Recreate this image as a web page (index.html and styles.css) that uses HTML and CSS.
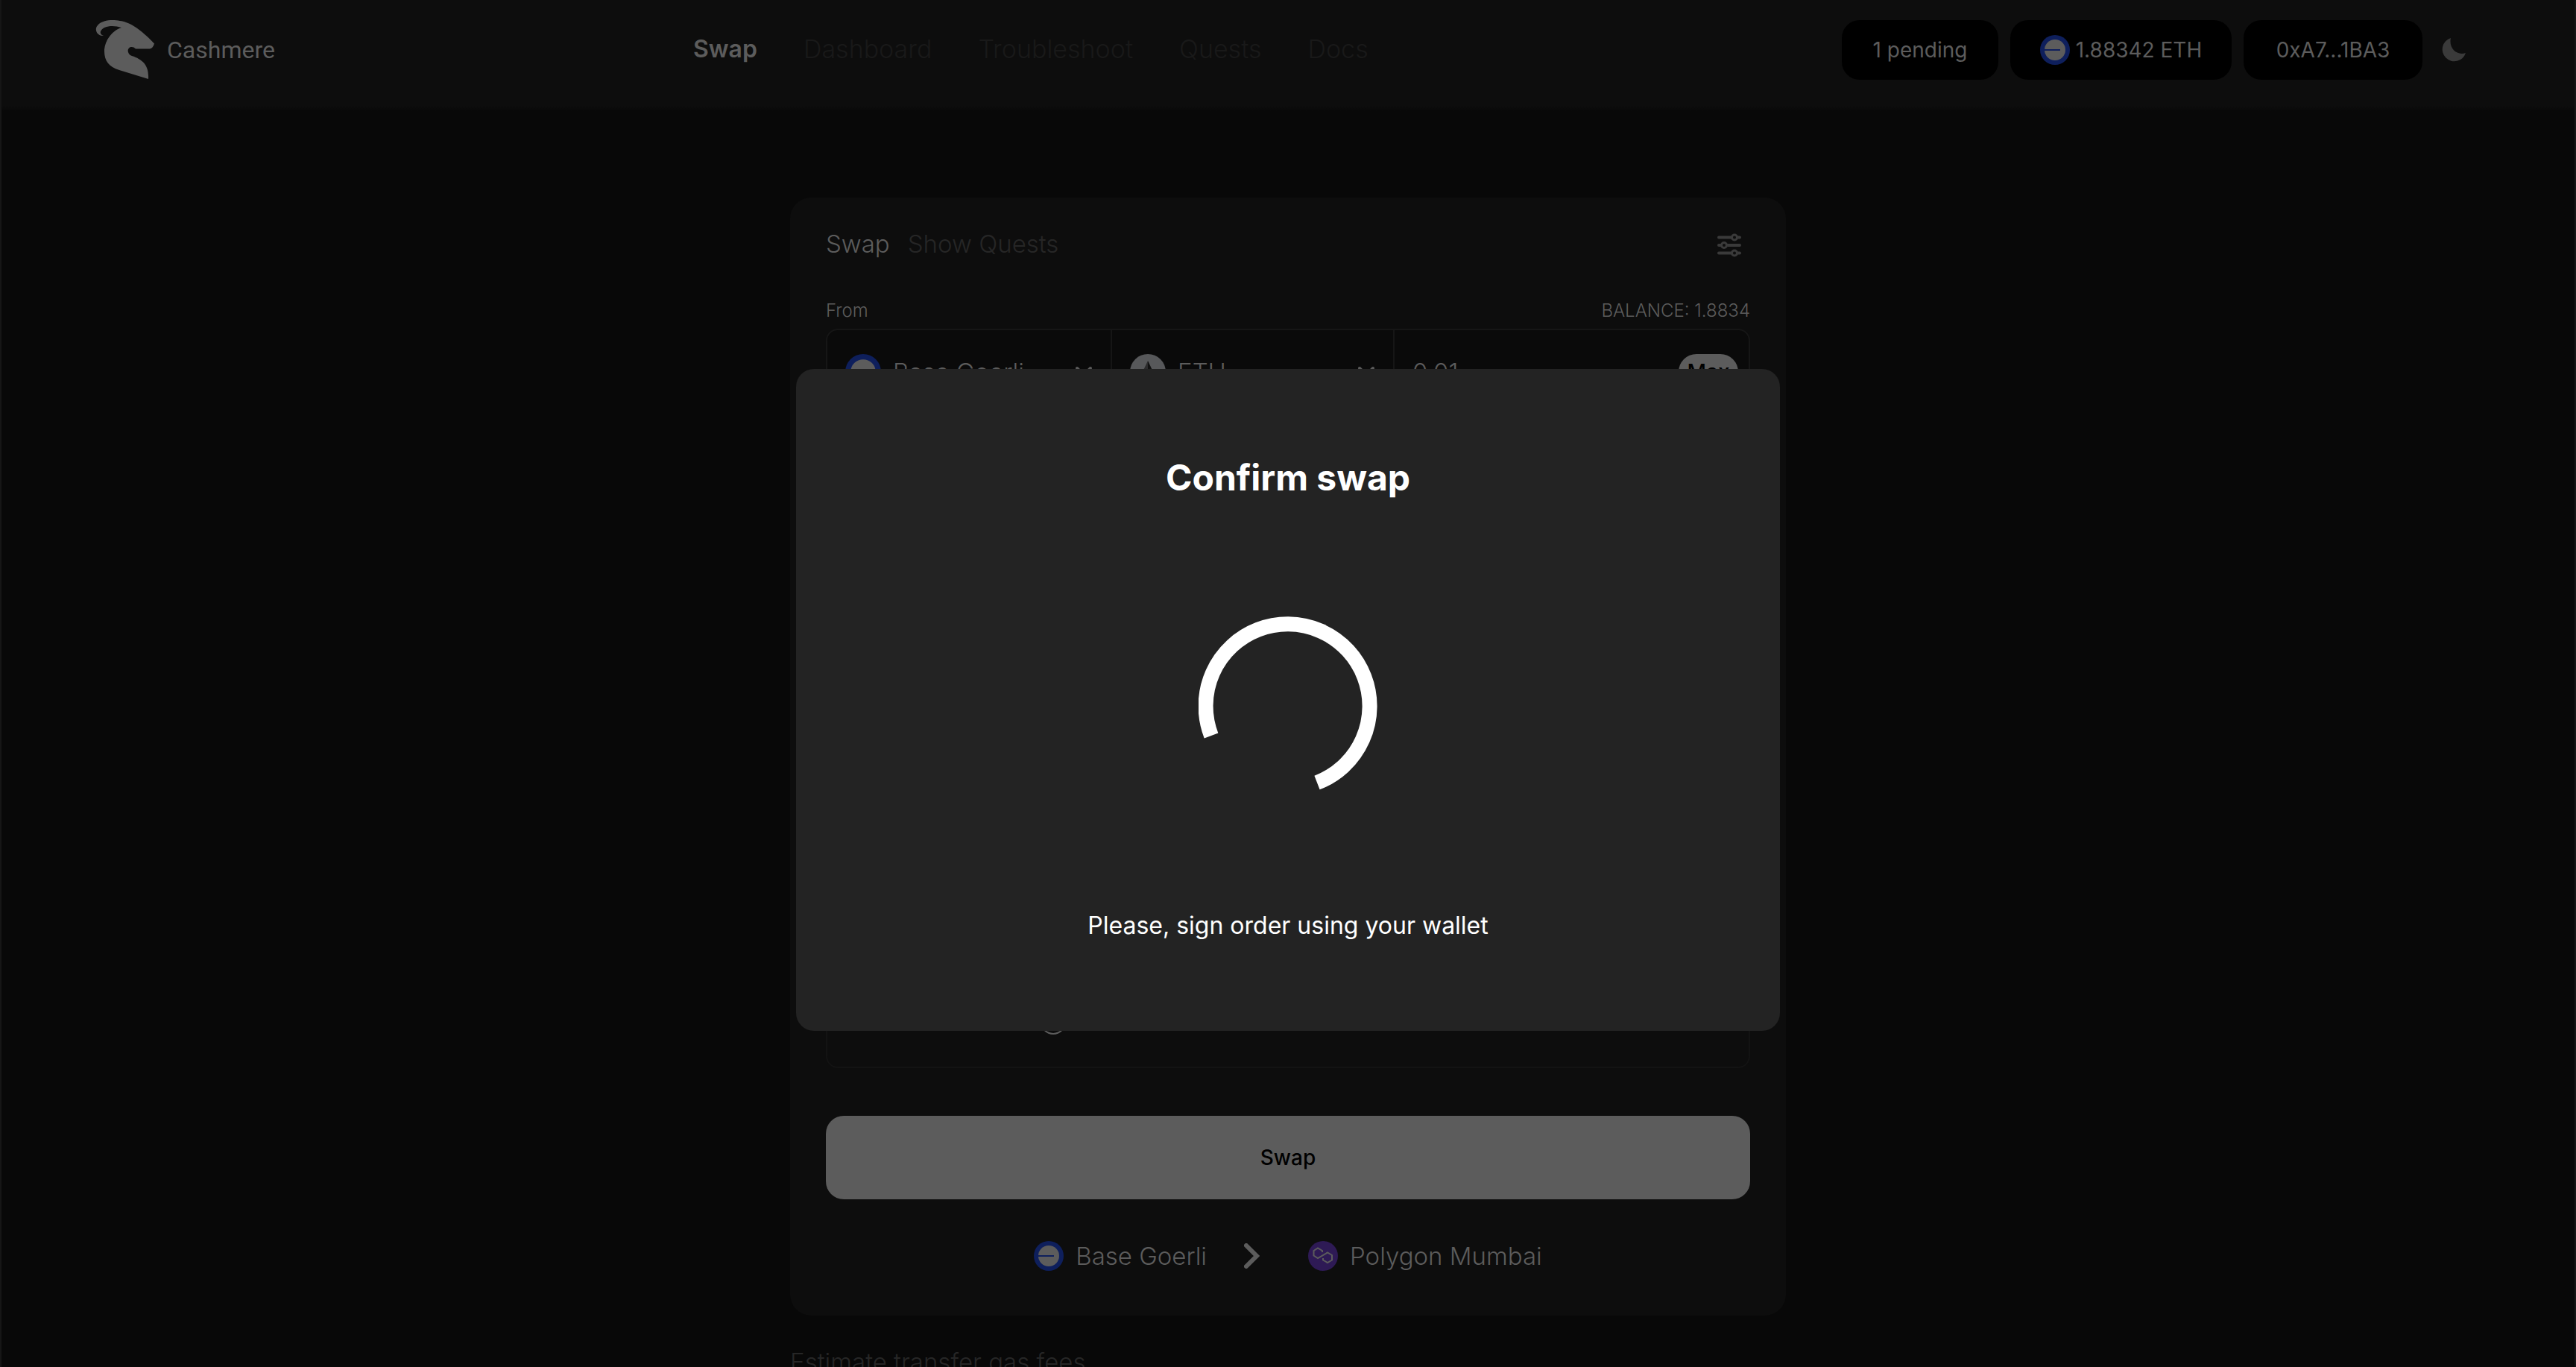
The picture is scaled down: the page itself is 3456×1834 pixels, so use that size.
FILE: index.html
```html
<!DOCTYPE html>
<html lang="en">
<head>
<meta charset="utf-8">
<title>Cashmere – Swap</title>
<link rel="stylesheet" href="styles.css">
</head>
<body>
<svg class="defs" width="0" height="0" aria-hidden="true">
  <symbol id="base" viewBox="0 0 40 40">
    <circle cx="20" cy="20" r="20" fill="#0e1f5c"/>
    <circle cx="20" cy="20" r="14" fill="#5c5c5c"/>
    <path d="M6 19h21v2H6z" fill="#0e1f5c"/>
  </symbol>
  <symbol id="eth" viewBox="0 0 48 48">
    <circle cx="24" cy="24" r="24" fill="#57585a"/>
    <path d="M24 9v15.500l-9 3.500z" fill="#2c2c2d"/>
    <path d="M24 9v15.500l9 3.500z" fill="#121212"/>
    <path d="M15 30l9 9 9-9-9 5z" fill="#222"/>
  </symbol>
  <symbol id="polygon" viewBox="0 0 40 40">
    <circle cx="20" cy="20" r="20" fill="#2e1a55"/>
    <path d="M19 15v-2l-6-3.500-5.500 3.500v6.500l5.500 3.500 13-7.500 6 3.500v6.500l-6 3.500-6-3.500v-2.500" fill="none" stroke="#5c5c5c" stroke-width="2"/>
  </symbol>
  <symbol id="down" viewBox="0 0 24 16">
    <path d="M3 3l9 9 9-9" fill="none" stroke="#5c5c5c" stroke-width="4" stroke-linecap="round" stroke-linejoin="round"/>
  </symbol>
</svg>

<header class="header">
  <a class="brand" href="#">
    <svg class="brand-mark" viewBox="0 0 80 80" aria-hidden="true">
      <path d="M11 21C2 22-2 12 3 7C12-3 32 0 41 3C56 8 72 24 79 31.500C78 35 76 38 73 38.500H54C49 33 42 37 44 43C45 47 49 48 52 49C64 54 72 61 71 79L32 67C18 63 12 54 12 42C12 30 20 15 35 10C23 6 10 8 7 15C6 18 8 20 11 21Z" fill="#5c5c5c"/>
    </svg>
    <span>Cashmere</span>
  </a>
  <nav class="nav">
    <a class="active" href="#">Swap</a>
    <a href="#">Dashboard</a>
    <a href="#">Troubleshoot</a>
    <a href="#">Quests</a>
    <a href="#">Docs</a>
  </nav>
  <div class="account">
    <button class="pill" type="button">1 pending</button>
    <button class="pill balance" type="button"><svg class="icon-40" aria-hidden="true"><use href="#base"/></svg>1.88342 ETH</button>
    <button class="pill address" type="button">0xA7...1BA3</button>
    <button class="theme" type="button" aria-label="Toggle theme">
      <svg viewBox="0 0 32 32" aria-hidden="true"><path d="M12 0A16 16 0 1 0 32 20C20 24 9 14 12 0Z" fill="#3a3a3a"/></svg>
    </button>
  </div>
</header>

<main class="main">
  <section class="card">
    <div class="card-head">
      <div class="tabs">
        <button class="tab selected" type="button">Swap</button>
        <button class="tab" type="button">Show Quests</button>
      </div>
      <button class="settings" type="button" aria-label="Settings">
        <svg viewBox="0 0 32 32" fill="none" stroke="#3a3a3a" stroke-width="4" stroke-linecap="round" aria-hidden="true">
          <path d="M2 5.500h16M28 5.500h2M2 16h3M14 16h16M2 26.500h16M28 26.500h2"/>
          <circle cx="23" cy="5.500" r="3.500" stroke-width="3"/><circle cx="9" cy="16" r="3.500" stroke-width="3"/><circle cx="23" cy="26.500" r="3.500" stroke-width="3"/>
        </svg>
      </button>
    </div>
    <div class="labels"><label for="amount">From</label><span>BALANCE: 1.8834</span></div>
    <div class="fields">
      <button class="field" type="button"><svg class="icon-48" aria-hidden="true"><use href="#base"/></svg><span>Base Goerli</span><svg class="down" aria-hidden="true"><use href="#down"/></svg></button>
      <button class="field" type="button"><svg class="icon-48" aria-hidden="true"><use href="#eth"/></svg><span>ETH</span><svg class="down" aria-hidden="true"><use href="#down"/></svg></button>
      <div class="field amount"><input id="amount" type="text" value="0.01"><button class="max" type="button">Max</button></div>
    </div>
    <div class="details"><svg class="ring" viewBox="0 0 34 34" aria-hidden="true"><circle cx="17" cy="17" r="16" fill="none" stroke="#5c5c5c" stroke-width="2"/></svg></div>
    <button class="submit" type="button">Swap</button>
    <div class="route">
      <span class="chain"><svg class="icon-40" aria-hidden="true"><use href="#base"/></svg>Base Goerli</span>
      <svg class="next" viewBox="0 0 22 34" aria-hidden="true"><path d="M3 3l14 14L3 31" fill="none" stroke="#5c5c5c" stroke-width="6" stroke-linecap="round" stroke-linejoin="miter"/></svg>
      <span class="chain"><svg class="icon-40" aria-hidden="true"><use href="#polygon"/></svg>Polygon Mumbai</span>
    </div>
  </section>
  <p class="estimate">Estimate transfer gas fees</p>
</main>

<div class="overlay">
  <div class="modal" role="dialog" aria-modal="true" aria-labelledby="modal-title">
    <h2 id="modal-title">Confirm swap</h2>
    <svg class="spinner" viewBox="0 0 240 240" aria-hidden="true"><path d="M17 160A110 110 0 1 1 159 223" fill="none" stroke="#fff" stroke-width="20"/></svg>
    <p>Please, sign order using your wallet</p>
  </div>
</div>
</body>
</html>
```
FILE: styles.css
```css
* { box-sizing: border-box; }

body {
  margin: 0;
  height: 100vh;
  overflow: hidden;
  background: #080808;
  color: #5c5c5c;
  font: 300 33px/40px Inter, "Open Sans", sans-serif;
}

button, input {
  margin: 0;
  padding: 0;
  border: 0;
  background: none;
  color: inherit;
  font: inherit;
}

a { color: inherit; text-decoration: none; }
svg { display: block; flex: none; }
.defs { position: absolute; }

.header {
  display: grid;
  grid-template-columns: minmax(0, 802px) auto 1fr;
  align-items: start;
  height: 148px;
  padding: 27px 148px 0 128px;
  background: linear-gradient(#0d0d0d 142px, #090909 148px);
}

.brand {
  display: flex;
  align-items: center;
  gap: 16px;
  height: 80px;
  font: 400 32px/40px Roboto, sans-serif;
}
.brand-mark { width: 80px; height: 80px; }

.nav {
  display: flex;
  align-items: center;
  gap: 62px;
  height: 78px;
  color: #191919;
  font-size: 34px;
}
.nav .active { color: #5c5c5c; font-size: 32px; font-weight: 600; }

.account { display: flex; justify-content: flex-end; gap: 16px; }
.pill {
  display: flex;
  align-items: center;
  justify-content: center;
  gap: 8px;
  height: 80px;
  min-width: 210px;
  border-radius: 24px;
  background: #000;
  font-size: 28px;
  font-weight: 400;
}
.balance { min-width: 297px; }
.address { min-width: 240px; }
.icon-40 { width: 40px; height: 40px; }
.icon-48 { width: 48px; height: 48px; }
.theme { width: 42px; padding-left: 10px; }
.theme svg { width: 32px; height: 32px; }

.main {
  width: 1336px;
  max-width: 100%;
  margin: 0 auto;
  padding-top: 117px;
}
.card {
  padding: 44px 48px 60px;
  border-radius: 28px;
  background: #0d0d0d;
}
.card-head {
  display: flex;
  justify-content: space-between;
  align-items: center;
  height: 40px;
  padding-right: 12px;
}
.tabs { display: flex; align-self: flex-start; gap: 24px; line-height: 36px; }
.tab { color: #262626; }
.tab.selected { color: #5c5c5c; }
.settings svg { width: 32px; height: 32px; }

.labels {
  display: flex;
  justify-content: space-between;
  margin: 52px 0 8px;
  font-size: 24px;
  line-height: 32px;
}

.fields {
  display: grid;
  grid-template-columns: 382px 379px 1fr;
  height: 116px;
  border: 2px solid #161616;
  border-radius: 16px;
  background: #0a0a0a;
}
.field {
  display: flex;
  align-items: center;
  gap: 16px;
  padding: 0 24px;
  border-right: 2px solid #161616;
}
.field span { flex: 1; text-align: left; }
.down { width: 24px; height: 16px; }
.amount { padding-right: 14px; border-right: 0; }
.amount input { flex: 1; width: 0; }
.max {
  width: 80px;
  height: 48px;
  border-radius: 24px;
  background: #5c5c5c;
  color: #000;
  font-size: 28px;
  font-weight: 500;
}

.details {
  display: flex;
  align-items: flex-end;
  height: 284px;
  margin-top: 592px;
  padding: 0 286px 43px;
  border: 2px solid #131313;
  border-radius: 16px;
}
.ring { width: 34px; height: 34px; }

.submit {
  display: block;
  width: 100%;
  height: 112px;
  margin-top: 64px;
  border-radius: 24px;
  background: #5c5c5c;
  color: #000;
  font-size: 28px;
  font-weight: 500;
}

.route {
  display: flex;
  justify-content: center;
  align-items: center;
  margin-top: 56px;
}
.chain { display: flex; align-items: center; gap: 16px; }
.next { width: 22px; height: 34px; margin: 0 64px 0 50px; }

.estimate { margin: 42px 0 0; color: #262626; }

.overlay {
  position: fixed;
  inset: 0;
  display: flex;
  justify-content: center;
  align-items: center;
  padding-top: 44px;
  border: solid #161616;
  border-width: 0 2px;
}
.modal {
  display: flex;
  flex-direction: column;
  align-items: center;
  width: 1320px;
  max-width: 100%;
  padding: 116px 40px 117px;
  border-radius: 24px;
  background: #232323;
  color: #fff;
}
.modal h2 { margin: 0; font-size: 48px; line-height: 60px; font-weight: 700; }
.modal p { margin: 0; font-size: 32px; font-weight: 400; line-height: 48px; }
.spinner { width: 240px; height: 240px; margin: 156px 0 151px; }
```
